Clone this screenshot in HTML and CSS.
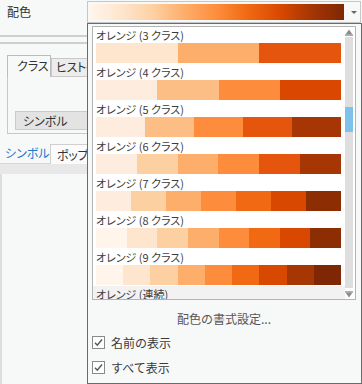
FILE: index.html
```html
<!DOCTYPE html>
<html lang="ja">
<head>
<meta charset="utf-8">
<link rel="stylesheet" href="styles.css">
</head>
<body>
<div class="app">
  <div class="top">
    <span class="lbl">配色</span>
    <div class="combo">
      <div class="grad"></div>
      <span class="caret"></span>
    </div>
  </div>
  <div class="rule r1"></div>
  <div class="rule r2"></div>
  <div class="tabs">
    <div class="tab sel">クラス</div>
    <div class="tab">ヒストグラム</div>
  </div>
  <div class="pane">
    <div class="btn">シンボル</div>
  </div>
  <div class="tabs2">
    <div class="tab2 link">シンボル</div>
    <div class="tab2 sel2">ポップアップ</div>
  </div>
  <div class="sep"></div>
  <div class="panel"></div>

  <div class="popup">
    <div class="list">
      <div class="items">
        <div class="item">
          <div class="name">オレンジ (3 クラス)</div>
          <div class="band"><span style="background:#fee6ce"></span><span style="background:#fdae6b"></span><span style="background:#e6550d"></span></div>
        </div>
        <div class="item">
          <div class="name">オレンジ (4 クラス)</div>
          <div class="band"><span style="background:#feedde"></span><span style="background:#fdbe85"></span><span style="background:#fd8d3c"></span><span style="background:#d94701"></span></div>
        </div>
        <div class="item">
          <div class="name">オレンジ (5 クラス)</div>
          <div class="band"><span style="background:#feedde"></span><span style="background:#fdbe85"></span><span style="background:#fd8d3c"></span><span style="background:#e6550d"></span><span style="background:#a63603"></span></div>
        </div>
        <div class="item">
          <div class="name">オレンジ (6 クラス)</div>
          <div class="band"><span style="background:#feedde"></span><span style="background:#fdd0a2"></span><span style="background:#fdae6b"></span><span style="background:#fd8d3c"></span><span style="background:#e6550d"></span><span style="background:#a63603"></span></div>
        </div>
        <div class="item">
          <div class="name">オレンジ (7 クラス)</div>
          <div class="band"><span style="background:#feedde"></span><span style="background:#fdd0a2"></span><span style="background:#fdae6b"></span><span style="background:#fd8d3c"></span><span style="background:#f16913"></span><span style="background:#d94801"></span><span style="background:#8c2d04"></span></div>
        </div>
        <div class="item">
          <div class="name">オレンジ (8 クラス)</div>
          <div class="band"><span style="background:#fff5eb"></span><span style="background:#fee6ce"></span><span style="background:#fdd0a2"></span><span style="background:#fdae6b"></span><span style="background:#fd8d3c"></span><span style="background:#f16913"></span><span style="background:#d94801"></span><span style="background:#8c2d04"></span></div>
        </div>
        <div class="item">
          <div class="name">オレンジ (9 クラス)</div>
          <div class="band"><span style="background:#fff5eb"></span><span style="background:#fee6ce"></span><span style="background:#fdd0a2"></span><span style="background:#fdae6b"></span><span style="background:#fd8d3c"></span><span style="background:#f16913"></span><span style="background:#d94801"></span><span style="background:#a63603"></span><span style="background:#7f2704"></span></div>
        </div>
        <div class="item hover">
          <div class="name">オレンジ (連続)</div>
          <div class="band cont"></div>
        </div>
      </div>
      <div class="sb">
        <div class="sb-btn"><svg width="8" height="7" viewBox="0 0 8 7"><path d="M4 0.5 L7.5 5.5 H0.5 Z" fill="#8c8c8c"/><rect x="0" y="5.5" width="8" height="1.2" fill="#8c8c8c"/></svg></div>
        <div class="track"><div class="thumb"></div></div>
        <div class="sb-btn dn"><svg width="8" height="7" viewBox="0 0 8 7"><rect x="0" y="0.3" width="8" height="1.2" fill="#8c8c8c"/><path d="M0.5 1.5 H7.5 L4 6.5 Z" fill="#8c8c8c"/></svg></div>
      </div>
    </div>
    <div class="fmt">配色の書式設定...</div>
    <div class="chk first">
      <span class="box"><svg width="11" height="11" viewBox="0 0 11 11"><path d="M2 5.8 L4.3 8.2 L9 2.6" fill="none" stroke="#5a5a5a" stroke-width="1.5"/></svg></span>
      <span class="chk-t">名前の表示</span>
    </div>
    <div class="chk">
      <span class="box"><svg width="11" height="11" viewBox="0 0 11 11"><path d="M2 5.8 L4.3 8.2 L9 2.6" fill="none" stroke="#5a5a5a" stroke-width="1.5"/></svg></span>
      <span class="chk-t">すべて表示</span>
    </div>
  </div>
</div>
</body>
</html>
```

FILE: styles.css
```css
* { box-sizing: border-box; }
html, body { margin: 0; padding: 0; }
body {
  width: 362px;
  height: 384px;
  overflow: hidden;
  background: #f7f8f8;
  font-family: "Noto Sans CJK JP", "Noto Sans", sans-serif;
  color: #333;
}
.app {
  position: relative;
  width: 362px;
  height: 384px;
  overflow: hidden;
  display: flex;
  flex-direction: column;
}
.top {
  display: flex;
  height: 23px;
  flex: none;
}
.lbl {
  width: 87px;
  padding-left: 7px;
  font-size: 12px;
  line-height: 23px;
  color: #333;
}
.combo {
  margin-top: 1px;
  width: 274px;
  height: 22px;
  border: 1px solid #c6c6c6;
  background: #f7f8f8;
  display: flex;
  align-items: center;
  padding: 2px 0 2px 2px;
}
.grad {
  width: 254px;
  height: 16px;
  background: linear-gradient(to right, #fff5eb, #fee6ce 12%, #fdd0a2 25%, #fdae6b 37%, #fd8d3c 50%, #f16913 62%, #d94801 75%, #a63603 87%, #7f2704);
}
.caret {
  margin-left: 7px;
  width: 0;
  height: 0;
  border-left: 3px solid transparent;
  border-right: 3px solid transparent;
  border-top: 3px solid #666;
}
.rule {
  flex: none;
  height: 2px;
  background: #cfcfcf;
}
.r1 { margin-top: 12px; }
.r2 { margin-top: 5px; }
.tabs {
  flex: none;
  margin-top: 10px;
  display: flex;
  align-items: flex-end;
  padding-left: 7px;
  height: 22px;
  font-feature-settings: "palt";
}
.tab {
  font-size: 12px;
  height: 18px;
  line-height: 16px;
  padding: 0 4px;
  border: 1px solid #c8c8c8;
  border-bottom: none;
  background: #ececec;
  white-space: nowrap;
  letter-spacing: -0.3px;
}
.tab.sel {
  height: 22px;
  line-height: 20px;
  padding: 0 9px;
  background: #f7f8f8;
  border-color: #bcbcbc;
  position: relative;
  top: 1px;
  width: 44px;
  letter-spacing: 0;
}
.pane {
  flex: none;
  margin-left: 7px;
  height: 58px;
  border: 1px solid #c8c8c8;
  padding: 34px 0 0 7px;
}
.btn {
  width: 200px;
  height: 19px;
  background: #e3e3e3;
  border: 1px solid #cacaca;
  font-size: 12px;
  line-height: 17px;
  padding-left: 7px;
  font-feature-settings: "palt";
}
.tabs2 {
  flex: none;
  margin-top: 9px;
  height: 21px;
  display: flex;
  align-items: flex-end;
  padding-left: 5px;
  border-bottom: 1px solid #d6d6d6;
  font-feature-settings: "palt";
}
.tab2 {
  font-size: 12px;
  height: 20px;
  line-height: 19px;
  white-space: nowrap;
}
.tab2.link {
  color: #1c79cf;
  width: 45px;
}
.tab2.sel2 {
  padding: 0 6px;
  border: 1px solid #cfcfcf;
  border-bottom: none;
  background: #fbfbfb;
  position: relative;
  top: 1px;
  letter-spacing: -0.3px;
}
.sep {
  flex: none;
  height: 10px;
  background: #e8e8e8;
}
.panel {
  flex: 1;
  background: #f7f8f8;
  border-left: 2px solid #dedede;
}

/* dropdown popup */
.popup {
  position: absolute;
  left: 87px;
  top: 23px;
  width: 275px;
  height: 361px;
  background: #f7f8f8;
  border: 1px solid #6b6b6b;
  display: flex;
  flex-direction: column;
  padding: 2px 5px 0 4px;
}
.list {
  flex: none;
  height: 274px;
  border: 1px solid #b4b4b4;
  background: #fff;
  display: flex;
}
.items {
  flex: 1;
  overflow: hidden;
}
.item {
  height: 37px;
  padding: 0 3px 1px 3px;
}
.item.hover { background: #f2f2f2; }
.name {
  height: 16px;
  font-size: 11px;
  line-height: 16px;
  color: #3c3c3c;
  white-space: nowrap;
  font-feature-settings: "palt";
}
.band {
  height: 20px;
  width: 245px;
  display: flex;
}
.band span { flex: 1; }
.band.cont {
  background: linear-gradient(to right, #fff5eb, #fee6ce 12%, #fdd0a2 25%, #fdae6b 37%, #fd8d3c 50%, #f16913 62%, #d94801 75%, #a63603 87%, #7f2704);
}
.sb {
  flex: none;
  width: 8px;
  margin-right: 2px;
  display: flex;
  flex-direction: column;
}
.sb-btn {
  height: 10px;
  display: flex;
  align-items: center;
  justify-content: center;
  padding-top: 1px;
}
.sb-btn.dn {
  height: 11px;
  padding-top: 2px;
}
.track {
  flex: 1;
  background: #dedede;
  padding-top: 70px;
}
.thumb {
  height: 25px;
  background: #7ec1ea;
}
.fmt {
  flex: none;
  margin-top: 9px;
  height: 20px;
  line-height: 20px;
  text-align: center;
  font-size: 12px;
  color: #555;
}
.chk {
  flex: none;
  display: flex;
  align-items: center;
  height: 13px;
  margin-top: 12px;
}
.chk.first { margin-top: 7px; }
.box {
  width: 13px;
  height: 13px;
  border: 1px solid #8a8a8a;
  background: #fff;
  display: flex;
  align-items: center;
  justify-content: center;
}
.chk-t {
  margin-left: 6px;
  font-size: 12px;
  line-height: 13px;
  color: #3a3a3a;
}
```
